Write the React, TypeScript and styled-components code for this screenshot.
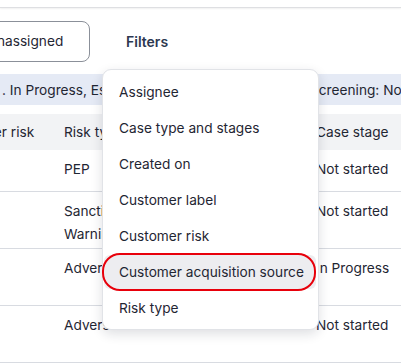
import React from "react";
import styled, { createGlobalStyle } from "styled-components";

const GlobalStyle = createGlobalStyle`
  body {
    margin: 0;
    background: #ffffff;
    font-family: Inter, "Liberation Sans", sans-serif;
    color: #1f2633;
    overflow: hidden;
  }
`;

const Page = styled.div`
  position: relative;
  width: 401px;
  height: 364px;
  overflow: hidden;
  background: #ffffff;
`;

const TopEdge = styled.div`
  height: 7px;
  border-bottom: 1px solid #dedfe2;
  box-shadow: 0 1px 2px rgba(0, 0, 0, 0.06);
`;

const Toolbar = styled.div`
  display: flex;
  align-items: center;
  gap: 36px;
  height: 66px;
  box-sizing: border-box;
`;

const Button = styled.div`
  flex: none;
  width: 130px;
  height: 41px;
  margin-left: -40px;
  box-sizing: border-box;
  border: 1px solid #8b9099;
  border-radius: 8px;
  display: flex;
  align-items: center;
  justify-content: center;
  font-size: 13.7px;
  color: #1f2633;
`;

const FilterLabel = styled.div`
  font-size: 14px;
  font-weight: 600;
  color: #2c3850;
`;

const Banner = styled.div`
  display: flex;
  align-items: center;
  height: 31px;
  background: #e5eaf5;
  font-size: 13.7px;
  white-space: nowrap;
`;

const BannerPart = styled.div<{ $width?: number }>`
  flex: none;
  width: ${(p) => (p.$width ? `${p.$width}px` : "auto")};
  overflow: hidden;
  padding-left: 2px;
`;

const Table = styled.div`
  margin-top: 9px;
  margin-left: -56px;
  font-size: 13.7px;
`;

const Row = styled.div<{ $header?: boolean; $height: number }>`
  display: grid;
  grid-template-columns: 120px 252px 140px;
  height: ${(p) => p.$height}px;
  box-sizing: border-box;
  align-items: ${(p) => (p.$header ? "center" : "start")};
  padding-top: ${(p) => (p.$header ? 0 : 8)}px;
  background: ${(p) => (p.$header ? "#f2f3f5" : "transparent")};
  border-bottom: ${(p) => (p.$header ? "none" : "1px solid #d8dbe1")};
  line-height: 23px;
`;

const Cell = styled.div`
  white-space: pre-line;
  padding-right: 8px;
`;

const Menu = styled.div`
  position: absolute;
  left: 102px;
  top: 69px;
  width: 217px;
  height: 261px;
  box-sizing: border-box;
  padding: 5px 2px 4px 1px;
  background: #ffffff;
  border: 1px solid #e1e3e7;
  border-radius: 9px;
  box-shadow: 0 4px 12px rgba(20, 30, 50, 0.14);
  display: flex;
  flex-direction: column;
  gap: 2px;
`;

const MenuItem = styled.div<{ $active?: boolean }>`
  position: relative;
  height: 34px;
  display: flex;
  align-items: center;
  padding-left: 15px;
  font-size: 13.7px;
  color: #1f2633;
  border-radius: 6px;
  background: ${(p) => (p.$active ? "#ededf0" : "transparent")};

  ${(p) =>
    p.$active &&
    `
    &::after {
      content: "";
      position: absolute;
      top: -2px;
      bottom: -2px;
      left: -2px;
      right: 0px;
      border: 2.5px solid #e8000b;
      border-radius: 18px;
    }
  `}
`;

const rows = [
  { h: 42, cells: ["Low", "PEP", "Not started"] },
  { h: 57, cells: ["Medium", "Sanctions\nWarning", "Not started"] },
  { h: 57, cells: ["High", "Adverse", "In Progress"] },
  { h: 57, cells: ["Low", "Adverse", "Not started"] },
];

const filters = [
  "Assignee",
  "Case type and stages",
  "Created on",
  "Customer label",
  "Customer risk",
  "Customer acquisition source",
  "Risk type",
];

export default function App() {
  return (
    <Page>
      <GlobalStyle />
      <TopEdge />
      <Toolbar>
        <Button>Unassigned</Button>
        <FilterLabel>Filters</FilterLabel>
      </Toolbar>
      <Banner>
        <BannerPart $width={306}>. In Progress, Escalated, On hold</BannerPart>
        <BannerPart>Screening: Not started</BannerPart>
      </Banner>
      <Table>
        <Row $header $height={36}>
          <Cell>Customer risk</Cell>
          <Cell>Risk type</Cell>
          <Cell>Case stage</Cell>
        </Row>
        {rows.map((r, i) => (
          <Row key={i} $height={r.h}>
            <Cell></Cell>
            <Cell>{r.cells[1]}</Cell>
            <Cell>{r.cells[2]}</Cell>
          </Row>
        ))}
      </Table>
      <Menu>
        {filters.map((f) => (
          <MenuItem key={f} $active={f === "Customer acquisition source"}>
            {f}
          </MenuItem>
        ))}
      </Menu>
    </Page>
  );
}
